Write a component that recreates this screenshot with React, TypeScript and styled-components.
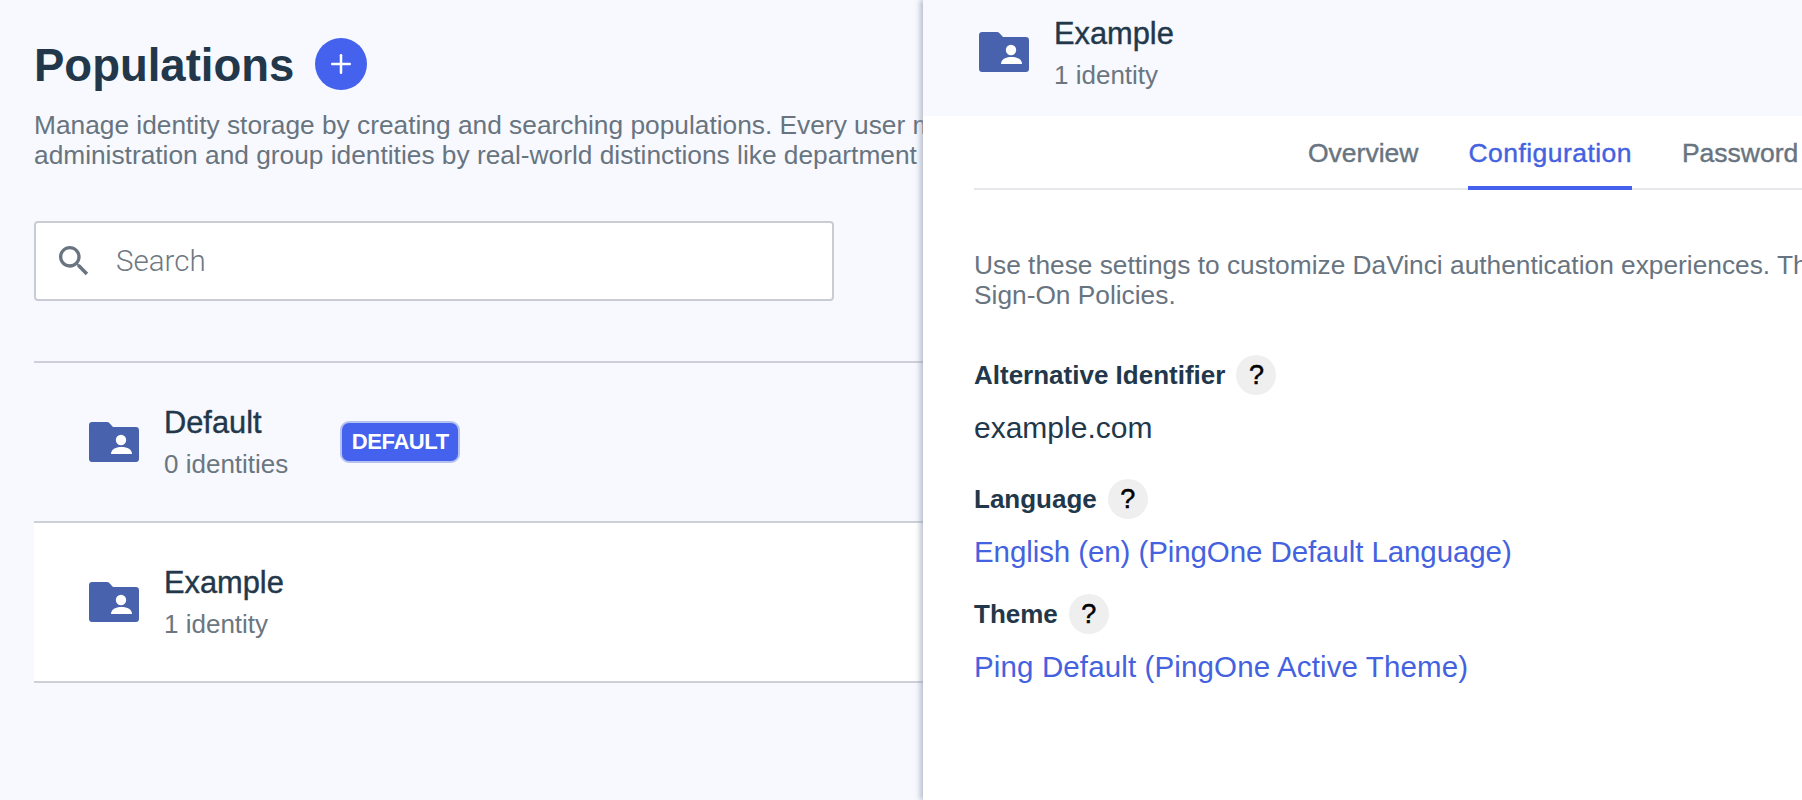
import React from 'react'
import styled, { createGlobalStyle } from 'styled-components'
import { Plus } from 'lucide-react'

const GlobalStyle = createGlobalStyle`
  html, body {
    margin: 0;
    padding: 0;
    height: 100%;
    overflow: hidden;
    background: #f7f9fe;
  }
  body {
    font-family: "Liberation Sans", Arial, sans-serif;
  }
`

const Page = styled.div`
  display: flex;
  width: 1802px;
  height: 800px;
  overflow: hidden;
  background: #f7f9fe;
`

const ListColumn = styled.main`
  flex: 0 0 923px;
  box-sizing: border-box;
  padding: 38px 0 0 34px;
  overflow: hidden;
`

const TitleRow = styled.div`
  display: flex;
  align-items: center;
  gap: 21px;
  height: 52px;
`

const Title = styled.h1`
  margin: 0;
  padding-top: 4px;
  font-size: 45.5px;
  line-height: 52px;
  font-weight: 700;
  color: #22384a;
`

const AddButton = styled.button`
  display: flex;
  align-items: center;
  justify-content: center;
  width: 52px;
  height: 52px;
  padding: 0;
  border: none;
  border-radius: 50%;
  background: #4462ed;
  color: #fff;
`

const Intro = styled.p`
  width: 1200px;
  margin: 20px 0 0;
  font-size: 26.3px;
  line-height: 30px;
  color: #68747f;
  white-space: pre-line;
`

const SearchBox = styled.label`
  display: flex;
  align-items: center;
  box-sizing: border-box;
  width: 800px;
  height: 80px;
  margin-top: 51px;
  padding-left: 18px;
  gap: 20px;
  background: #fff;
  border: 2px solid #c9ccd4;
  border-radius: 4px;
  color: #68747f;
`

const SearchInput = styled.input`
  flex: 1;
  min-width: 0;
  border: none;
  outline: none;
  background: none;
  font-family: Roboto, "Liberation Sans", sans-serif;
  font-weight: 300;
  font-size: 29.5px;
  color: #22384a;

  &::placeholder {
    color: #6f7982;
    opacity: 1;
  }
`

const List = styled.ul`
  width: 1200px;
  margin: 60px 0 0;
  padding: 0;
  list-style: none;
  border-top: 2px solid #cdd0d8;
`

const Row = styled.li<{ $selected?: boolean }>`
  display: flex;
  align-items: center;
  box-sizing: border-box;
  height: 160px;
  padding-left: 55px;
  gap: 25px;
  background: ${({ $selected }) => ($selected ? '#fff' : 'transparent')};
  border-bottom: 2px solid #cdd0d8;
`

const Names = styled.div<{ $drop?: number }>`
  display: flex;
  flex-direction: column;
  padding-top: ${({ $drop = 0 }) => $drop}px;
`

const Name = styled.div`
  font-size: 30.8px;
  line-height: 36px;
  color: #22384a;
  -webkit-text-stroke: 0.4px #22384a;
`

const Count = styled.div`
  margin-top: 7px;
  font-size: 26px;
  line-height: 32px;
  color: #6b7680;
`

const Badge = styled.span`
  box-sizing: border-box;
  display: flex;
  align-items: center;
  justify-content: center;
  width: 120px;
  height: 42px;
  margin-left: 27px;
  border: 2px solid #b5c1ef;
  border-radius: 9px;
  background: #4462ed;
  color: #fff;
  font-size: 22px;
  letter-spacing: -0.4px;
  font-weight: 700;
`

const Panel = styled.aside`
  flex: 1;
  min-width: 0;
  position: relative;
  background: #fff;
  box-shadow: -3px 0 5px rgba(140, 145, 170, 0.55);
  overflow: hidden;
`

const PanelHeader = styled.header`
  display: flex;
  align-items: center;
  box-sizing: border-box;
  height: 116px;
  padding: 0 0 12px 56px;
  gap: 25px;
  background: #f7f9fe;
`

const PanelBody = styled.div`
  padding-left: 51px;
`

const Tabs = styled.nav`
  display: flex;
  gap: 50px;
  box-sizing: border-box;
  height: 74px;
  padding-left: 334px;
  border-bottom: 2px solid #e6e7ea;
`

const Tab = styled.a<{ $active?: boolean }>`
  box-sizing: border-box;
  height: 74px;
  padding-top: 20px;
  font-size: 26.5px;
  line-height: 34px;
  white-space: nowrap;
  letter-spacing: ${({ $active }) => ($active ? '0.45px' : '0')};
  color: ${({ $active }) => ($active ? '#4462e0' : '#68747f')};
  -webkit-text-stroke: 0.4px ${({ $active }) => ($active ? '#4462e0' : '#68747f')};
  border-bottom: ${({ $active }) => ($active ? '4px solid #4462ed' : 'none')};
`

const PanelIntro = styled.p`
  width: 1200px;
  margin: 60px 0 0;
  font-size: 26.3px;
  line-height: 30px;
  color: #68747f;
  white-space: pre-line;
`

const FieldLabel = styled.div`
  display: flex;
  align-items: center;
  gap: 11px;
  height: 40px;
  font-size: 26px;
  font-weight: 700;
  color: #22384a;
`

const Help = styled.span`
  display: flex;
  align-items: center;
  justify-content: center;
  width: 40px;
  height: 40px;
  border-radius: 50%;
  background: #efefef;
  color: #000;
  font-size: 27px;
  font-weight: 400;
  -webkit-text-stroke: 0.5px #000;
`

const Field = styled.section<{ $gap: number }>`
  margin-top: ${({ $gap }) => $gap}px;
`

const FieldValue = styled.div<{ $link?: boolean; $spacing?: number }>`
  margin-top: 14px;
  font-size: ${({ $link }) => ($link ? '29.5px' : '30px')};
  line-height: 38px;
  letter-spacing: ${({ $spacing = 0 }) => $spacing}px;
  color: ${({ $link }) => ($link ? '#4462e0' : '#22384a')};
`

const SearchIcon = () => (
  <svg width="40" height="40" viewBox="0 0 24 24" fill="currentColor" style={{ flex: 'none' }}>
    <path d="M15.5 14h-.79l-.28-.27C15.41 12.59 16 11.11 16 9.5 16 5.910 13.090 3 9.500 3S3 5.910 3 9.500 5.910 16 9.500 16c1.610 0 3.090-.590 4.230-1.570l.270.280v.790l5 4.990L20.490 19l-4.990-5zm-6 0C7.010 14 5 11.990 5 9.500S7.010 5 9.500 5 14 7.010 14 9.500 11.990 14 9.500 14z" />
  </svg>
)

const FolderIcon = () => (
  <svg width="50" height="40" viewBox="0 0 50 40" fill="none" style={{ flex: 'none' }}>
    <path
      d="M3 0h15c1 0 1.700.400 2.300 1.100L24 5h23c1.700 0 3 1.300 3 3v29c0 1.700-1.300 3-3 3H3c-1.700 0-3-1.300-3-3V3c0-1.700 1.300-3 3-3z"
      fill="#4862ad"
    />
    <circle cx="32" cy="18" r="5.200" fill="#fff" />
    <path d="M22 32c0-4.500 4.500-7 10.500-7S43 27.500 43 32H22z" fill="#fff" />
  </svg>
)

const fields = [
  { label: 'Language', value: 'English (en) (PingOne Default Language)', gap: 32, spacing: -0.09 },
  { label: 'Theme', value: 'Ping Default (PingOne Active Theme)', gap: 23, spacing: 0.13 },
]

export default function App() {
  return (
    <Page>
      <GlobalStyle />
      <ListColumn>
        <TitleRow>
          <Title>Populations</Title>
          <AddButton aria-label="Add population">
            <Plus size={30} strokeWidth={2} />
          </AddButton>
        </TitleRow>
        <Intro>
          {'Manage identity storage by creating and searching populations. Every user must\nadministration and group identities by real-world distinctions like department'}
        </Intro>
        <SearchBox>
          <SearchIcon />
          <SearchInput placeholder="Search" />
        </SearchBox>
        <List>
          <Row>
            <FolderIcon />
            <Names>
              <Name>Default</Name>
              <Count>0 identities</Count>
            </Names>
            <Badge>DEFAULT</Badge>
          </Row>
          <Row $selected>
            <FolderIcon />
            <Names>
              <Name>Example</Name>
              <Count>1 identity</Count>
            </Names>
          </Row>
        </List>
      </ListColumn>
      <Panel>
        <PanelHeader>
          <FolderIcon />
          <Names $drop={2}>
            <Name>Example</Name>
            <Count>1 identity</Count>
          </Names>
        </PanelHeader>
        <PanelBody>
          <Tabs>
            <Tab>Overview</Tab>
            <Tab $active>Configuration</Tab>
            <Tab>Password</Tab>
          </Tabs>
          <PanelIntro>
            {'Use these settings to customize DaVinci authentication experiences. These\nSign-On Policies.'}
          </PanelIntro>
          <Field $gap={45}>
            <FieldLabel>
              Alternative Identifier
              <Help>?</Help>
            </FieldLabel>
            <FieldValue>example.com</FieldValue>
          </Field>
          {fields.map((field) => (
            <Field key={field.label} $gap={field.gap}>
              <FieldLabel>
                {field.label}
                <Help>?</Help>
              </FieldLabel>
              <FieldValue $link $spacing={field.spacing}>
                {field.value}
              </FieldValue>
            </Field>
          ))}
        </PanelBody>
      </Panel>
    </Page>
  )
}
